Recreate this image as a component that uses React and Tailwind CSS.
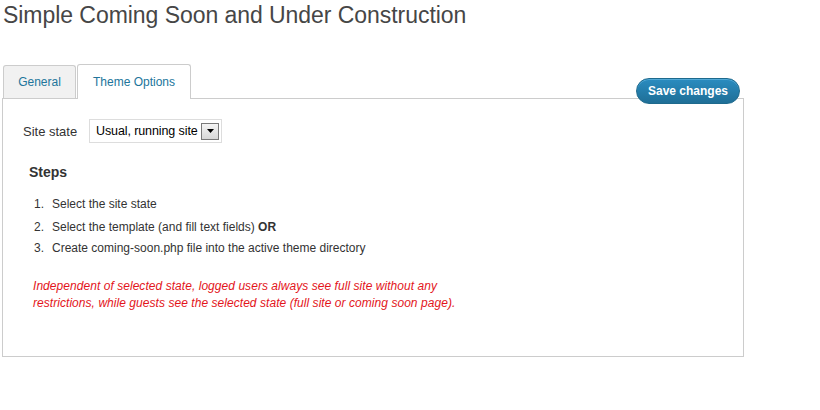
import React from "react";

export default function App() {
  return (
    <div className="w-[820px] h-[410px] bg-white font-['Liberation_Sans',Arial,sans-serif] overflow-hidden">
      <h2 className="pl-[3px] pt-[1px] text-[23px] leading-[29px] text-[#464646] font-normal tracking-[-0.05px]">
        Simple Coming Soon and Under Construction
      </h2>
      <div className="relative mt-[34px] ml-[2px] w-[742px]">
        <div className="flex items-end pl-[1px] gap-[1px]">
          <div className="w-[73px] h-[33px] bg-[#f1f1f1] border border-b-0 border-[#cccccc] rounded-t-[3px] flex items-center justify-center text-[12px] text-[#21759b]">
            General
          </div>
          <div className="relative z-10 mb-[-1px] w-[114px] h-[35px] bg-white border border-b-0 border-[#cccccc] rounded-t-[3px] flex items-center justify-center text-[12px] text-[#21759b] pb-[1px]">
            Theme Options
          </div>
        </div>
        <button className="absolute right-[4px] top-[14px] z-20 w-[104px] h-[26px] rounded-full border border-[#1e6a8d] bg-gradient-to-b from-[#2a8cc0] to-[#1f6f97] text-white text-[12px] font-bold leading-none shadow-[inset_0_1px_0_rgba(120,200,240,0.5)]">
          Save changes
        </button>
        <div className="h-[259px] border border-[#cccccc] bg-white pt-[20px] pl-[20px]">
          <div className="flex items-center">
            <span className="w-[66px] text-[13px] text-[#333] leading-[17px]">Site state</span>
            <div className="w-[133px] h-[24px] border border-[#dddddd] flex items-center pl-[6px] pr-[2px] text-[12.5px] text-black bg-white">
              <span className="whitespace-nowrap flex-1 leading-[17px] tracking-[-0.1px]">Usual, running site</span>
              <span className="shrink-0 w-[18px] h-[17px] border border-[#7a7a7a] bg-gradient-to-b from-[#f4f4f4] to-[#d8d8d8] flex items-center justify-center">
                <svg width="7" height="4" viewBox="0 0 7 4">
                  <path d="M0 0 H7 L3.5 4 Z" fill="#000" />
                </svg>
              </span>
            </div>
          </div>
          <h3 className="mt-[21px] ml-[6px] text-[14px] font-bold leading-[17px] text-[#333]">Steps</h3>
          <ol className="mt-[15px] ml-[11px] text-[12px] leading-[17px] text-[#333]">
            <li className="flex mb-[6px]"><span className="w-[18px]">1.</span><span>Select the site state</span></li>
            <li className="flex mb-[4px]"><span className="w-[18px]">2.</span><span>Select the template (and fill text fields) <b>OR</b></span></li>
            <li className="flex"><span className="w-[18px]">3.</span><span>Create coming-soon.php file into the active theme directory</span></li>
          </ol>
          <p className="mt-[21px] ml-[10px] text-[12px] italic leading-[17px] text-[#e3151b] tracking-[0.05px]">
            Independent of selected state, logged users always see full site without any
            <br />
            restrictions, while guests see the selected state (full site or coming soon page).
          </p>
        </div>
      </div>
    </div>
  );
}
